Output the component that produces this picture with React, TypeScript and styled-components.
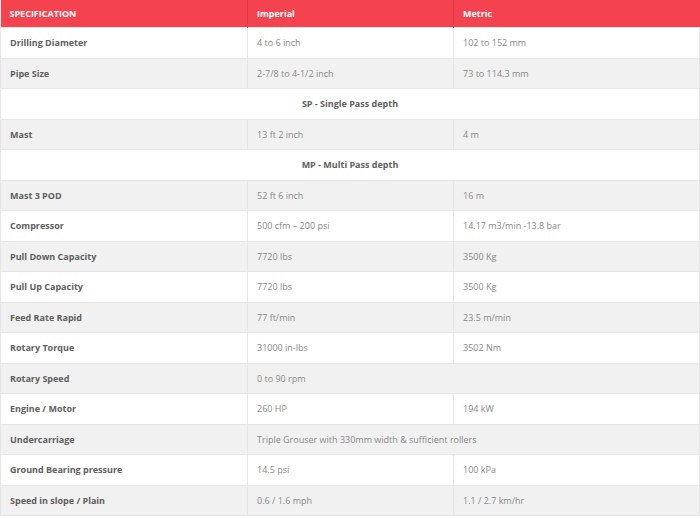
import React from 'react';
import styled, { createGlobalStyle } from 'styled-components';

const GlobalStyle = createGlobalStyle`
  body {
    margin: 0;
    background: #fff;
    font-family: "Open Sans", "Liberation Sans", sans-serif;
  }
`;

type Row =
  | { kind: 'spec'; label: string; imperial: string; metric?: string }
  | { kind: 'section'; title: string };

const rows: Row[] = [
  { kind: 'spec', label: 'Drilling Diameter', imperial: '4 to 6 inch', metric: '102 to 152 mm' },
  { kind: 'spec', label: 'Pipe Size', imperial: '2-7/8 to 4-1/2 inch', metric: '73 to 114.3 mm' },
  { kind: 'section', title: 'SP - Single Pass depth' },
  { kind: 'spec', label: 'Mast', imperial: '13 ft 2 inch', metric: '4 m' },
  { kind: 'section', title: 'MP - Multi Pass depth' },
  { kind: 'spec', label: 'Mast 3 POD', imperial: '52 ft 6 inch', metric: '16 m' },
  { kind: 'spec', label: 'Compressor', imperial: '500 cfm – 200 psi', metric: '14.17 m3/min -13.8 bar' },
  { kind: 'spec', label: 'Pull Down Capacity', imperial: '7720 lbs', metric: '3500 Kg' },
  { kind: 'spec', label: 'Pull Up Capacity', imperial: '7720 lbs', metric: '3500 Kg' },
  { kind: 'spec', label: 'Feed Rate Rapid', imperial: '77 ft/min', metric: '23.5 m/min' },
  { kind: 'spec', label: 'Rotary Torque', imperial: '31000 in-lbs', metric: '3502 Nm' },
  { kind: 'spec', label: 'Rotary Speed', imperial: '0 to 90 rpm' },
  { kind: 'spec', label: 'Engine / Motor', imperial: '260 HP', metric: '194 kW' },
  { kind: 'spec', label: 'Undercarriage', imperial: 'Triple Grouser with 330mm width & sufficient rollers' },
  { kind: 'spec', label: 'Ground Bearing pressure', imperial: '14.5 psi', metric: '100 kPa' },
  { kind: 'spec', label: 'Speed in slope / Plain', imperial: '0.6 / 1.6 mph', metric: '1.1 / 2.7 km/hr' },
];

const App = () => (
  <>
    <GlobalStyle />
    <SpecTable>
      <colgroup>
        <col style={{ width: 247 }} />
        <col style={{ width: 206 }} />
        <col />
      </colgroup>
      <thead>
        <tr>
          <HeadCell>SPECIFICATION</HeadCell>
          <HeadCell>Imperial</HeadCell>
          <HeadCell>Metric</HeadCell>
        </tr>
      </thead>
      <tbody>
        {rows.map((row, i) =>
          row.kind === 'section' ? (
            <BodyRow key={i} $striped={i % 2 === 1}>
              <SectionCell colSpan={3}>{row.title}</SectionCell>
            </BodyRow>
          ) : (
            <BodyRow key={i} $striped={i % 2 === 1}>
              <LabelCell>{row.label}</LabelCell>
              {row.metric ? (
                <>
                  <ValueCell>{row.imperial}</ValueCell>
                  <ValueCell>{row.metric}</ValueCell>
                </>
              ) : (
                <ValueCell colSpan={2}>{row.imperial}</ValueCell>
              )}
            </BodyRow>
          )
        )}
      </tbody>
    </SpecTable>
  </>
);

const SpecTable = styled.table`
  width: 700px;
  border-collapse: collapse;
  table-layout: fixed;
  font-size: 9px;
  border-bottom: 1px solid #e6e6e6;
`;

const HeadCell = styled.th`
  height: 27px;
  padding: 0 9px;
  background: #f4434f;
  color: #fff;
  font-weight: 700;
  font-size: 9px;
  text-align: left;
  border-left: 1px solid #e03a46;
  vertical-align: middle;

  &:first-child {
    border-left: none;
  }
`;

const BodyRow = styled.tr<{ $striped: boolean }>`
  background: ${(p) => (p.$striped ? '#f1f1f1' : '#fff')};
  border-top: 1px solid #e6e6e6;
`;

const cellBase = `
  height: 29.5px;
  padding: 0 9px;
  border-left: 1px solid #e6e6e6;
  border-right: 1px solid #e6e6e6;
  vertical-align: middle;
  white-space: nowrap;
`;

const LabelCell = styled.td`
  ${cellBase}
  color: #5e5e5e;
  font-weight: 700;
`;

const ValueCell = styled.td`
  ${cellBase}
  color: #888;
  font-weight: 400;
`;

const SectionCell = styled.td`
  ${cellBase}
  text-align: center;
  color: #5e5e5e;
  font-weight: 700;
`;

export default App;
